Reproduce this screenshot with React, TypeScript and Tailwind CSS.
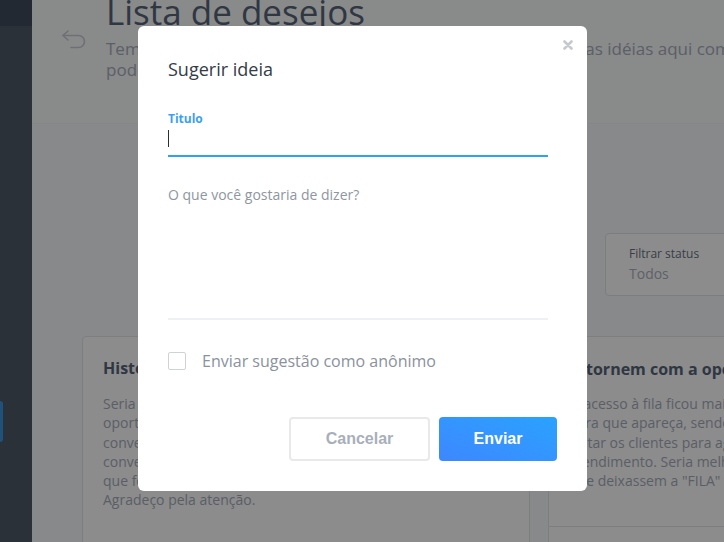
import React from "react";

function BackIcon() {
  return (
    <svg width="25" height="19" viewBox="0 0 25 19" fill="none" stroke="#c9cdd2" strokeWidth="1.6" strokeLinecap="round" strokeLinejoin="round">
      <path d="M6 1 L1 5.5 L6 10" />
      <path d="M1 5.5 H16.5 A6 6 0 0 1 16.5 17.5 H9" />
    </svg>
  );
}

export default function App() {
  return (
    <div className="relative w-[724px] h-[542px] overflow-hidden flex font-['Open_Sans',sans-serif] bg-[#f7f9fb]">
      {/* Sidebar */}
      <aside className="w-[32px] shrink-0 bg-[#4e5969] flex flex-col">
        <div className="h-[26px] bg-[#404b5b]" />
        <div className="mt-[375px] h-[41px] w-[3px] rounded-r bg-[#3a96de]" />
      </aside>

      {/* Main */}
      <main className="flex-1 flex flex-col min-w-0">
        <header className="h-[124px] shrink-0 flex pl-[30px] bg-[#fafbfc] border-b border-[#f4f5f7]">
          <div className="pt-[30px] w-[44px] shrink-0">
            <BackIcon />
          </div>
          <div className="flex flex-col min-w-0">
            <h1 className="mt-[-6px] text-[35px] leading-[36px] text-[#56647a] whitespace-nowrap">Lista de desejos</h1>
            <p className="mt-[8px] text-[17px] leading-[21px] text-[#a6aebb] whitespace-nowrap">
              Tem alguma ideia e sugestão para esta plataforma? Deixe suas idéias aqui com
              <br />
              podemos melhorar juntos.
            </p>
          </div>
        </header>

        <div className="flex-1 flex flex-col">
          {/* Filter */}
          <div className="flex pt-[109px]">
            <div className="ml-[573px] w-[140px] h-[63px] shrink-0 rounded-[4px] border border-[#e1e5ea] bg-white pl-[23px] pt-[12px]">
              <div className="text-[12px] leading-[16px] text-[#68727f] whitespace-nowrap">Filtrar status</div>
              <div className="mt-[3px] text-[14px] leading-[18px] text-[#aab2bd] whitespace-nowrap">Todos</div>
            </div>
          </div>

          {/* Cards */}
          <div className="flex gap-[18px] pl-[50px] mt-[40px]">
            <section className="w-[448px] shrink-0 h-[260px] rounded-tl-[4px] border border-[#e3e6ea] bg-white pl-[20px] pt-[20px]">
              <h2 className="text-[16px] leading-[22px] font-bold text-[#56647a] whitespace-nowrap">Histórico de conversas</h2>
              <p className="mt-[15px] text-[14px] leading-[19.3px] text-[#a5adb9] whitespace-nowrap">
                Seria muito bom se tivéssemos a<br />
                oportunidade de ver o histórico de<br />
                conversas anteriores do cliente na<br />
                conversa atual, para entender o<br />
                que foi tratado anteriormente.<br />
                Agradeço pela atenção.
              </p>
            </section>
            <section className="w-[300px] shrink-0 h-[260px] border border-[#e3e6ea] bg-white flex flex-col">
              <div className="h-[189px] pl-[20px] pt-[21px]">
                <h2 className="-ml-[3px] text-[16px] leading-[22px] font-bold text-[#56647a] whitespace-nowrap">Retornem com a opção de fila</h2>
                <p className="mt-[14px] text-[14px] leading-[19.3px] text-[#a5adb9] whitespace-nowrap">
                  O acesso à fila ficou mais difícil<br />
                  para que apareça, sendo necessário<br />
                  evitar os clientes para aguardarem o<br />
                  atendimento. Seria melhor<br />
                  que deixassem a "FILA" visível.
                </p>
              </div>
              <div className="border-t border-[#e3e6ea] flex-1" />
            </section>
          </div>
        </div>
      </main>

      {/* Overlay */}
      <div className="absolute inset-0 bg-black/45" />

      {/* Modal */}
      <div className="absolute left-[138px] top-[26px] w-[449px] h-[465px] bg-white rounded-[6px] px-[30px] pt-[31px]">
        <button className="absolute right-[13px] top-[13px] w-[12px] h-[12px] flex items-center justify-center">
          <svg width="10" height="10" viewBox="0 0 10 10" stroke="#c5c9cf" strokeWidth="2.6" strokeLinecap="round">
            <path d="M1.5 1.5 L8.5 8.5 M8.5 1.5 L1.5 8.5" />
          </svg>
        </button>
        <h3 className="text-[18px] leading-[24px] text-[#333c47]">Sugerir ideia</h3>

        <div className="mt-[30px] w-[380px]">
          <label className="block text-[12px] leading-[16px] font-bold text-[#3b9ff5]">Titulo</label>
          <div className="h-[30px] border-b-2 border-[#2ea3f5] pt-[3px]">
            <div className="w-[1px] h-[17px] bg-[#2a2f36]" />
          </div>
        </div>

        <div className="mt-[29px] w-[380px] h-[134px] border-b-2 border-[#eef0f3]">
          <div className="text-[14px] leading-[18px] text-[#8e96a1]">O que você gostaria de dizer?</div>
        </div>

        <label className="mt-[32px] flex items-center gap-[16px]">
          <span className="w-[18px] h-[18px] rounded-[2px] border border-[#cfd3d8] bg-white shrink-0" />
          <span className="text-[16px] leading-[18px] text-[#8a929d]">Enviar sugestão como anônimo</span>
        </label>

        <div className="mt-[47px] flex justify-end gap-[9px]">
          <button className="w-[141px] h-[44px] rounded-[4px] border-2 border-[#e9e9ea] bg-white font-['Liberation_Sans',Arial,sans-serif] font-bold text-[16px] text-[#a8afba]">
            Cancelar
          </button>
          <button className="w-[118px] h-[44px] rounded-[4px] bg-linear-to-tr from-[#3d87fe] to-[#28a2ff] font-['Liberation_Sans',Arial,sans-serif] font-bold text-[16px] text-white">
            Enviar
          </button>
        </div>
      </div>
    </div>
  );
}
